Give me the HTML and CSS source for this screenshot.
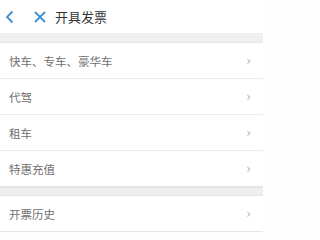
FILE: index.html
```html
<!DOCTYPE html>
<html lang="zh">
<head>
<meta charset="utf-8">
<link rel="stylesheet" href="styles.css">
</head>
<body>
<div class="page">
  <header class="topbar">
    <svg class="icon back" width="12" height="16" viewBox="0 0 12 16"><path d="M9.5 2.5 L4 8 L9.5 13.5" fill="none" stroke="#3d8fd3" stroke-width="1.8"/></svg>
    <svg class="icon close" width="14" height="14" viewBox="0 0 14 14"><path d="M2 2 L12 12 M12 2 L2 12" fill="none" stroke="#3d8fd3" stroke-width="1.8"/></svg>
    <span class="title">开具发票</span>
  </header>
  <div class="gap"></div>
  <ul class="list">
    <li class="row"><span>快车、专车、豪华车</span><span class="chev">›</span></li>
    <li class="row"><span>代驾</span><span class="chev">›</span></li>
    <li class="row"><span>租车</span><span class="chev">›</span></li>
    <li class="row"><span>特惠充值</span><span class="chev">›</span></li>
  </ul>
  <div class="gap small"></div>
  <ul class="list">
    <li class="row"><span>开票历史</span><span class="chev">›</span></li>
  </ul>
</div>
</body>
</html>
```
FILE: styles.css
```css
html, body {
  margin: 0;
  padding: 0;
  background: #fdfdfd;
}
.page {
  width: 263px;
  font-family: "Noto Sans CJK SC", "Noto Sans", sans-serif;
}
.topbar {
  height: 33px;
  display: flex;
  align-items: center;
  background: #fff;
  padding-left: 3px;
}
.icon.close { margin-left: 18px; }
.title {
  margin-left: 8px;
  font-size: 13px;
  color: #333;
}
.gap {
  height: 9px;
  background: #efefef;
  border-bottom: 1px solid #e6e6e6;
}
.gap.small { height: 7px; border-top: 1px solid #e6e6e6; }
.list {
  list-style: none;
  margin: 0;
  padding: 0;
  background: #fff;
}
.row {
  height: 35px;
  display: flex;
  align-items: center;
  justify-content: space-between;
  padding: 0 12px 0 9px;
  border-bottom: 1px solid #ececec;
  font-size: 11.5px;
  color: #707070;
}
.list .row:last-child { border-bottom: 1px solid #e4e4e4; }
.chev {
  font-family: "DejaVu Sans", sans-serif;
  font-size: 12px;
  color: #b5b5b5;
}
```
